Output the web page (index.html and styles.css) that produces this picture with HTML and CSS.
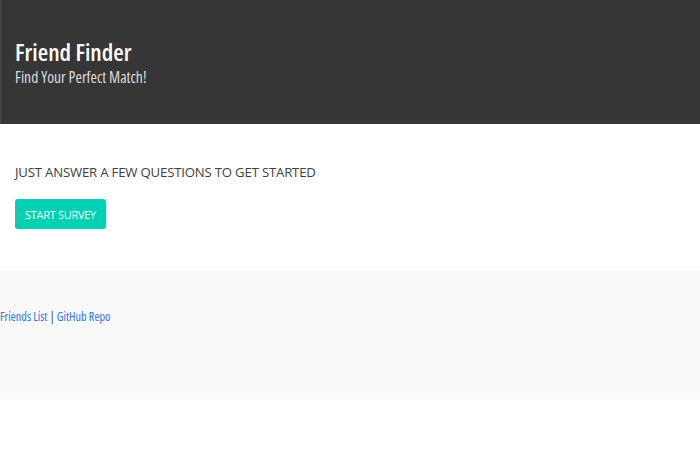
FILE: index.html
```html
<!DOCTYPE html>
<html lang="en">
<head>
<meta charset="utf-8">
<title>Friend Finder</title>
<link rel="stylesheet" href="styles.css">
</head>
<body>
<header class="hero">
  <h1 class="title">Friend Finder</h1>
  <p class="subtitle">Find Your Perfect Match!</p>
</header>
<main class="section">
  <h2 class="lead">Just answer a few questions to get started</h2>
  <a class="button" href="#">Start Survey</a>
</main>
<footer class="footer">
  <p class="links"><a href="#">Friends List</a> | <a href="#">GitHub Repo</a></p>
</footer>
</body>
</html>
```
FILE: styles.css
```css
html, body {
  margin: 0;
  padding: 0;
  background: #ffffff;
  font-family: "Open Sans", "DejaVu Sans", sans-serif;
}
.hero {
  background: #363636;
  height: 124px;
  box-sizing: border-box;
  padding: 36px 14px 0;
  border-left: 1px solid #4a4a4a;
}
.title {
  margin: 0;
  color: #ffffff;
  font-size: 24px;
  font-weight: 600;
  font-stretch: 75%;
  line-height: 32px;
}
.subtitle {
  margin: 0;
  color: #dcdcdc;
  font-size: 15.6px;
  font-stretch: 75%;
  line-height: 18px;
}
.section {
  padding: 38px 15px 41px;
  display: flex;
  flex-direction: column;
  align-items: flex-start;
  gap: 17px;
}
.lead {
  margin: 0;
  font-size: 13.2px;
  font-weight: 400;
  line-height: 20px;
  letter-spacing: -0.2px;
  color: #404040;
  text-transform: uppercase;
}
.button {
  display: inline-flex;
  align-items: center;
  height: 30px;
  box-sizing: border-box;
  padding: 1px 10px 0;
  background: #00d1b2;
  color: #ffffff;
  font-size: 11px;
  letter-spacing: -0.3px;
  text-transform: uppercase;
  text-decoration: none;
  border-radius: 3px;
}
.footer {
  background: #fafafa;
  height: 129px;
  box-sizing: border-box;
  padding-top: 39px;
}
.links {
  margin: 0;
  font-size: 12.2px;
  font-stretch: 75%;
  color: #4a4a4a;
  line-height: 16px;
}
.links a {
  color: #3273dc;
  text-decoration: none;
}
```
